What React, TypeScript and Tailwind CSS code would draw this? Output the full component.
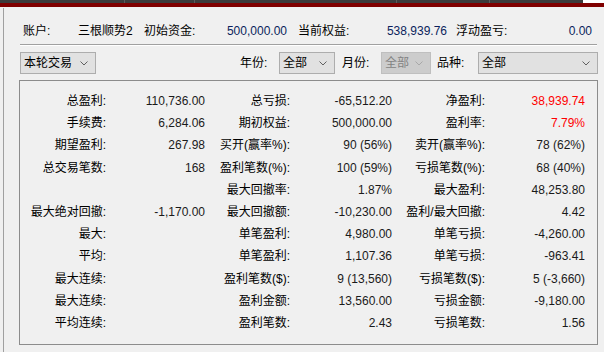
const rows: [string, string, string, string, string, string, boolean?][] = [
  ["总盈利:", "110,736.00", "总亏损:", "-65,512.20", "净盈利:", "38,939.74", true],
  ["手续费:", "6,284.06", "期初权益:", "500,000.00", "盈利率:", "7.79%", true],
  ["期望盈利:", "267.98", "买开(赢率%):", "90 (56%)", "卖开(赢率%):", "78 (62%)"],
  ["总交易笔数:", "168", "盈利笔数(%):", "100 (59%)", "亏损笔数(%):", "68 (40%)"],
  ["", "", "最大回撤率:", "1.87%", "最大盈利:", "48,253.80"],
  ["最大绝对回撤:", "-1,170.00", "最大回撤额:", "-10,230.00", "盈利/最大回撤:", "4.42"],
  ["最大:", "", "单笔盈利:", "4,980.00", "单笔亏损:", "-4,260.00"],
  ["平均:", "", "单笔盈利:", "1,107.36", "单笔亏损:", "-963.41"],
  ["最大连续:", "", "盈利笔数($):", "9 (13,560)", "亏损笔数($):", "5 (-3,660)"],
  ["最大连续:", "", "盈利金额:", "13,560.00", "亏损金额:", "-9,180.00"],
  ["平均连续:", "", "盈利笔数:", "2.43", "亏损笔数:", "1.56"],
];

function Chevron({ color = "#606060" }: { color?: string }) {
  return (
    <svg width="8" height="5" viewBox="0 0 8 5" className="shrink-0">
      <path d="M0.5 0.5 L4 4 L7.5 0.5" fill="none" stroke={color} strokeWidth="1" />
    </svg>
  );
}

function Combo({ text, width, disabled }: { text: string; width: string; disabled?: boolean }) {
  return (
    <div
      className={`${width} h-[22px] flex items-center justify-between pl-[3px] pr-[7px] border ${
        disabled ? "bg-[#cccccc] border-[#bfbfbf] text-[#838383]" : "bg-[#e1e1e1] border-[#adadad] text-black"
      }`}
    >
      <span>{text}</span>
      <Chevron color={disabled ? "#a8a8a8" : "#606060"} />
    </div>
  );
}

export default function App() {
  return (
    <div
      className="w-[604px] h-[352px] bg-[#f0f0f0] flex flex-col overflow-hidden text-[12px] leading-none text-black"
      style={{ fontFamily: '"Liberation Sans", "Noto Sans CJK SC", sans-serif' }}
    >
      {/* tab strip */}
      <div className="h-[3px] flex">
        <div className="w-[583px] bg-[#3c3c3c] flex">
          <div className="w-[125px] border-r border-[#5c5c5c]" />
          <div className="w-[70px] border-r border-[#5c5c5c]" />
          <div className="w-[202px] border-r border-[#5c5c5c]" />
          <div className="w-[93px] border-r border-[#5c5c5c]" />
        </div>
        <div className="flex-1 bg-white" />
      </div>
      <div className="h-[4px] bg-[#800000]" />

      <div className="flex-1 flex">
        <div className="w-[3px]" />
        <div className="w-px bg-[#a0a0a0] mt-px" />
        <div className="flex-1 flex flex-col">
          {/* account row */}
          <div className="h-[20px] mt-[14px] flex items-center pl-[19px] whitespace-nowrap">
            <div className="w-[55px]">账户:</div>
            <div className="w-[66px]">三根顺势2</div>
            <div className="w-[60px]">初始资金:</div>
            <div className="w-[83px] text-right text-[#0b1f5c]">500,000.00</div>
            <div className="w-[60px] ml-[11px]">当前权益:</div>
            <div className="w-[89px] text-right text-[#0b1f5c]">538,939.76</div>
            <div className="w-[60px] ml-[9px]">浮动盈亏:</div>
            <div className="w-[76px] text-right text-[#0b1f5c]">0.00</div>
          </div>
          <div className="ml-[16px] w-[577px] mt-[3px] h-px bg-[#a0a0a0]" />
          <div className="ml-[16px] w-[577px] h-px bg-white" />

          {/* filter row */}
          <div className="mt-[6px] flex items-center pl-[16px] whitespace-nowrap">
            <Combo text="本轮交易" width="w-[76px]" />
            <div className="ml-[144px] w-[39px]">年份:</div>
            <Combo text="全部" width="w-[56px]" />
            <div className="ml-[7px] w-[39px]">月份:</div>
            <Combo text="全部" width="w-[50px]" disabled />
            <div className="ml-[6px] w-[41px]">品种:</div>
            <Combo text="全部" width="w-[120px]" />
          </div>

          {/* stats group */}
          <div className="ml-[15px] mt-[6px] w-[579px] h-[265px] border border-[#8c8c8c] pt-[9px]">
            {rows.map((r, i) => (
              <div
                key={i}
                className="grid grid-cols-[86px_99px_85px_102px_93px_100px] h-[22.2px] items-center whitespace-nowrap"
              >
                <div className="text-right">{r[0]}</div>
                <div className="text-right text-[#1a1a1a]">{r[1]}</div>
                <div className="text-right">{r[2]}</div>
                <div className="text-right text-[#1a1a1a]">{r[3]}</div>
                <div className="text-right">{r[4]}</div>
                <div className={`text-right ${r[6] ? "text-[#ff0000]" : "text-[#1a1a1a]"}`}>{r[5]}</div>
              </div>
            ))}
          </div>
        </div>
      </div>
    </div>
  );
}
